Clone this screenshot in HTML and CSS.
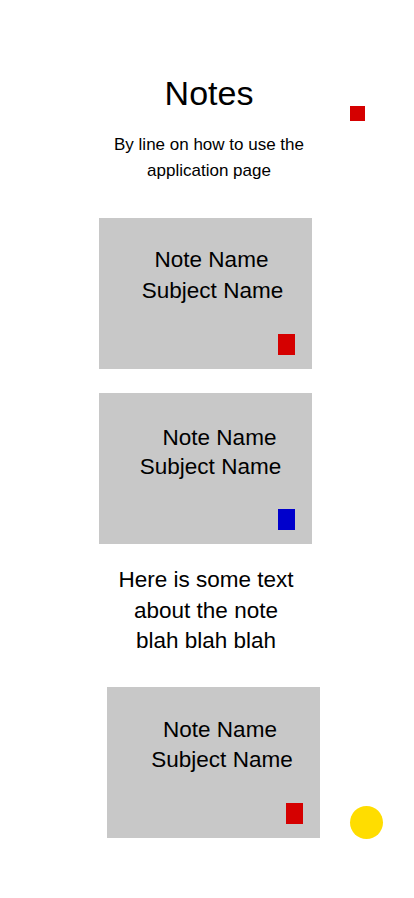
FILE: index.html
```html
<!DOCTYPE html>
<html lang="en">
<head>
    <meta charset="UTF-8">
    <meta name="viewport" content="width=device-width, initial-scale=1.0">
    <title>Notes</title>
    <link rel="stylesheet" href="styles.css">
</head>
<body>
    <div class="page">
        <header class="header">
            <h1 class="title">Notes</h1>
            <p class="subtitle">By line on how to use the application page</p>
        </header>
        <span class="menu-btn"></span>

        <div class="note-card">
            <div class="note-text">
                <div class="line shift-12">Note Name</div>
                <div class="line shift-14">Subject Name</div>
            </div>
            <span class="note-tag tag-red"></span>
        </div>

        <div class="note-card card-open">
            <div class="note-text">
                <div class="line shift-28">Note Name</div>
                <div class="line shift-10">Subject Name</div>
            </div>
            <span class="note-tag tag-blue"></span>
        </div>

        <p class="note-body">Here is some text about the note blah blah blah</p>

        <div class="note-card card-last">
            <div class="note-text">
                <div class="line shift-13">Note Name</div>
                <div class="line shift-17">Subject Name</div>
            </div>
            <span class="note-tag tag-red"></span>
        </div>

        <button class="fab"></button>
    </div>
</body>
</html>
```

FILE: styles.css
```css
body {
    font-family: 'Liberation Sans', Arial, sans-serif;
    margin: 0;
    background-color: #fff;
    color: #000;
}

.page {
    position: relative;
    width: 414px;
    height: 898px;
    display: flex;
    flex-direction: column;
}

.header {
    display: flex;
    flex-direction: column;
    align-items: center;
    padding-left: 4px;
}

.title {
    font-size: 34px;
    font-weight: normal;
    line-height: 40px;
    margin: 73px 0 0 0;
}

.subtitle {
    font-size: 17px;
    line-height: 26px;
    max-width: 240px;
    text-align: center;
    margin: 19px 0 0 0;
}

.menu-btn {
    position: absolute;
    top: 106px;
    left: 350px;
    width: 15px;
    height: 15px;
    background-color: #d50000;
}

.note-card {
    width: 213px;
    height: 151px;
    margin: 34px 0 0 99px;
    background-color: #c8c8c8;
    display: flex;
    flex-direction: column;
}

.card-open {
    margin-top: 24px;
}

.card-open .note-text {
    padding-top: 30px;
}

.card-open .line {
    line-height: 29px;
}

.card-last {
    margin: 30px 0 0 107px;
}

.card-last .note-text {
    padding-top: 28px;
}

.note-text {
    padding-top: 27px;
    font-size: 22.5px;
    line-height: 30.5px;
}

.line {
    text-align: center;
}

.shift-10 { padding-left: 10px; }
.shift-12 { padding-left: 12px; }
.shift-13 { padding-left: 13px; }
.shift-14 { padding-left: 14px; }
.shift-17 { padding-left: 17px; }
.shift-28 { padding-left: 28px; }

.note-tag {
    margin-top: auto;
    align-self: flex-end;
    width: 17px;
    height: 21px;
    margin-right: 17px;
    margin-bottom: 14px;
}

.tag-red {
    background-color: #d50000;
}

.tag-blue {
    background-color: #0000cc;
}

.note-body {
    width: 184px;
    margin: 21px 0 0 114px;
    font-size: 22.5px;
    line-height: 30.5px;
    text-align: center;
}

.fab {
    position: absolute;
    top: 806px;
    left: 350px;
    width: 33px;
    height: 33px;
    padding: 0;
    border: none;
    border-radius: 50%;
    background-color: #ffdd00;
}
```
